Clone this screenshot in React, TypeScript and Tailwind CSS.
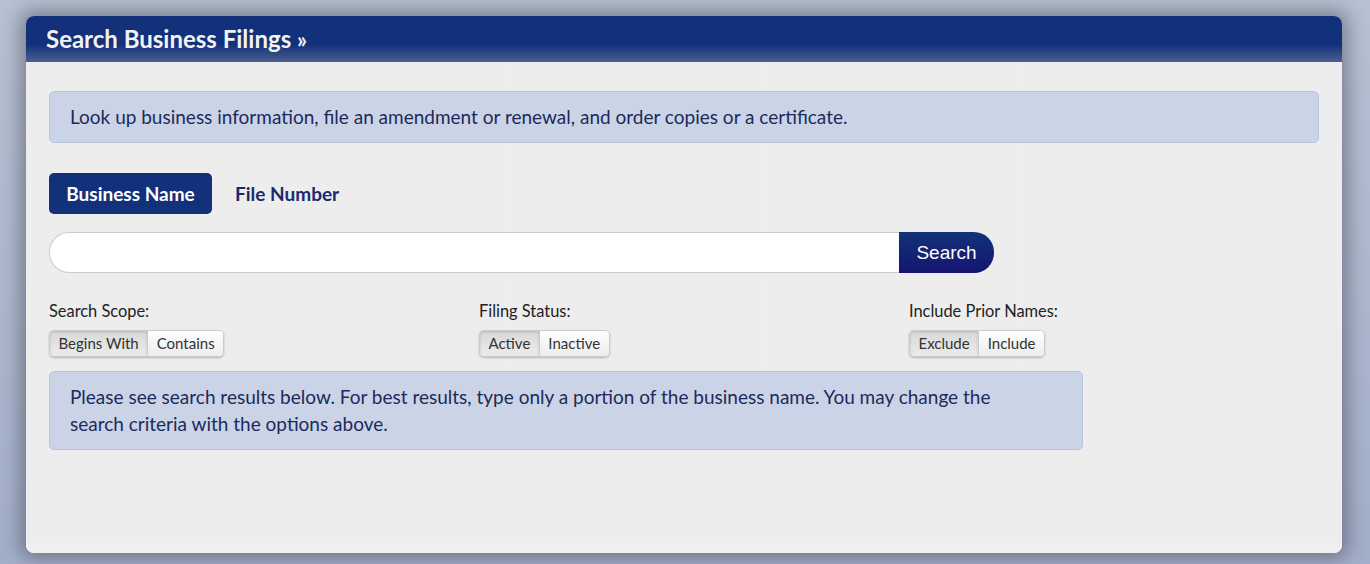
const lato = { fontFamily: 'Lato, sans-serif' }

function Toggle({ label, options }: { label: string; options: [string, string] }) {
  return (
    <div className="w-[430px] shrink-0">
      <div className="pt-px text-[16.4px] leading-[18px] text-[#222]">{label}</div>
      <div className="mt-[10px] inline-flex h-[27px] rounded-[5px] border border-[#ccc] text-[15px] text-[#333] shadow-[0_1px_2px_rgba(0,0,0,0.25)]">
        <button className="rounded-l-[4px] border-r border-[#ccc] bg-gradient-to-b from-[#d8d8d8] to-[#ececec] px-[8.5px] shadow-[inset_0_1px_3px_rgba(0,0,0,0.15)]">
          {options[0]}
        </button>
        <button className="rounded-r-[4px] bg-gradient-to-b from-white to-[#ececec] px-[8.5px]">
          {options[1]}
        </button>
      </div>
    </div>
  )
}

export default function App() {
  return (
    <div style={lato} className="h-[564px] overflow-hidden bg-gradient-to-b from-[#b7c1d3] to-[#a3aeca] pt-4 pl-[26px] pr-[28px]">
      <div className="flex h-[537px] flex-col overflow-hidden rounded-lg bg-[#ededed] shadow-[0_0_18px_6px_rgba(70,70,80,0.5)]">
        <div className="h-[46px] shrink-0 bg-[linear-gradient(to_bottom,#13317a_0%,#13317a_62%,#4a5f8e_100%)] pl-5 text-[24px] leading-[46px] font-bold text-[#f2f2f2]">
          Search Business Filings <span className="text-[22px]">»</span>
        </div>
        <div className="flex-1 bg-gradient-to-b from-[#ededed] from-[97%] to-[#f1f1f1] px-[23px] pt-[29px]">
          <div className="flex h-[52px] items-center rounded-[5px] border border-[#b3c6de] bg-[#cbd4e6] pl-5 text-[19px] text-[#1c2a5c]">
            Look up business information, file an amendment or renewal, and order copies or a certificate.
          </div>

          <div className="mt-[30px] flex items-center">
            <button className="h-[41px] w-[163px] rounded-[5px] bg-[#13317a] pt-[2px] text-[19px] font-bold text-white">
              Business Name
            </button>
            <button className="ml-[23px] pt-[2px] text-[19px] font-bold text-[#1c2a6c]">
              File Number
            </button>
          </div>

          <div className="mt-[18px] flex h-[41px] w-[945px]">
            <input className="h-full w-[850px] rounded-l-[20px] border border-r-0 border-[#ccc] bg-white outline-none" />
            <button
              style={{ fontFamily: '"Liberation Sans", Arial, sans-serif' }}
              className="h-full w-[95px] rounded-r-[20px] bg-gradient-to-b from-[#13317a] to-[#141470] pt-[2px] text-[19px] text-white"
            >
              Search
            </button>
          </div>

          <div className="mt-[28px] flex">
            <Toggle label="Search Scope:" options={['Begins With', 'Contains']} />
            <Toggle label="Filing Status:" options={['Active', 'Inactive']} />
            <Toggle label="Include Prior Names:" options={['Exclude', 'Include']} />
          </div>

          <div className="mt-[14px] h-[79px] w-[1034px] rounded-[5px] border border-[#b3c6de] bg-[#cbd4e6] pt-[11px] pr-[60px] pl-5 text-[19px] leading-[27px] text-[#1c2a5c]">
            Please see search results below. For best results, type only a portion of the business name. You may change the search criteria with the options above.
          </div>
        </div>
      </div>
    </div>
  )
}
